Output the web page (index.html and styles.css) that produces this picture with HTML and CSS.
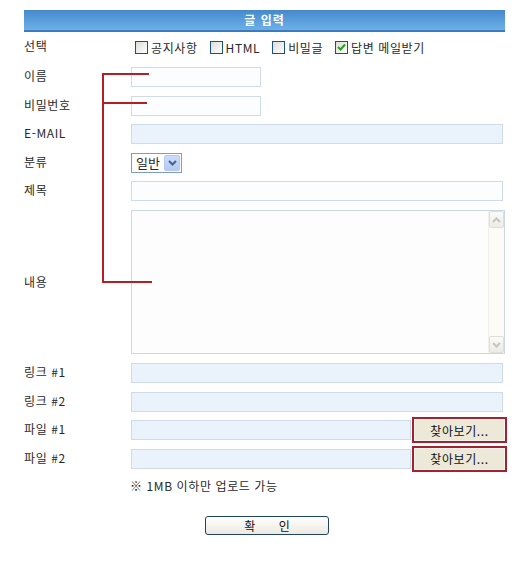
FILE: index.html
```html
<!DOCTYPE html>
<html lang="ko">
<head>
    <meta charset="UTF-8">
    <title>글 입력</title>
    <link rel="stylesheet" href="styles.css">
</head>
<body>
    <div class="write-form">
        <div class="title-bar">글 입력</div>

        <div class="row row-options">
            <span class="label">선택</span>
            <div class="options">
                <label class="check"><span class="box"></span>공지사항</label>
                <label class="check"><span class="box"></span>HTML</label>
                <label class="check"><span class="box"></span>비밀글</label>
                <label class="check"><span class="box checked">
                    <svg width="9" height="8" viewBox="0 0 9 8"><path d="M1 4 L3.5 6.5 L8 1.5" fill="none" stroke="#21a121" stroke-width="2"/></svg>
                </span>답변 메일받기</label>
            </div>
        </div>

        <div class="row">
            <span class="label">이름</span>
            <input type="text" class="field short white">
        </div>
        <div class="row">
            <span class="label">비밀번호</span>
            <input type="password" class="field short white">
        </div>
        <div class="row">
            <span class="label">E-MAIL</span>
            <input type="text" class="field wide">
        </div>
        <div class="row">
            <span class="label">분류</span>
            <div class="select">
                <span class="select-value">일반</span>
                <span class="select-btn">
                    <svg width="9" height="6" viewBox="0 0 9 6"><path d="M1 1 L4.5 4.5 L8 1" fill="none" stroke="#4d6185" stroke-width="2"/></svg>
                </span>
            </div>
        </div>
        <div class="row">
            <span class="label">제목</span>
            <input type="text" class="field wide white">
        </div>
        <div class="row row-content">
            <span class="label">내용</span>
            <div class="textbox">
                <textarea></textarea>
                <div class="scrollbar">
                    <span class="scroll-btn">
                        <svg width="9" height="6" viewBox="0 0 9 6"><path d="M1 5 L4.5 1.5 L8 5" fill="none" stroke="#c4c6c2" stroke-width="2"/></svg>
                    </span>
                    <span class="scroll-btn">
                        <svg width="9" height="6" viewBox="0 0 9 6"><path d="M1 1 L4.5 4.5 L8 1" fill="none" stroke="#c4c6c2" stroke-width="2"/></svg>
                    </span>
                </div>
            </div>
        </div>
        <div class="row">
            <span class="label">링크 #1</span>
            <input type="text" class="field wide">
        </div>
        <div class="row">
            <span class="label">링크 #2</span>
            <input type="text" class="field wide">
        </div>
        <div class="row">
            <span class="label">파일 #1</span>
            <div class="file">
                <input type="text" class="field file-path">
                <button class="find-button">찾아보기...</button>
            </div>
        </div>
        <div class="row">
            <span class="label">파일 #2</span>
            <div class="file">
                <input type="text" class="field file-path">
                <button class="find-button">찾아보기...</button>
            </div>
        </div>
        <div class="note">※ 1MB 이하만 업로드 가능</div>

        <div class="submit">
            <button class="submit-button">확&nbsp;&nbsp;&nbsp;&nbsp;&nbsp;&nbsp;&nbsp;인</button>
        </div>

        <!-- red guide lines -->
        <div class="guide guide-v"></div>
        <div class="guide guide-h1"></div>
        <div class="guide guide-h2"></div>
        <div class="guide guide-h3"></div>
    </div>
</body>
</html>
```

FILE: styles.css
```css
* {
    box-sizing: border-box;
}
body {
    margin: 0;
    background-color: #FFFFFF;
    font-family: "Noto Sans CJK KR", "Liberation Sans", sans-serif;
    font-size: 12px;
    letter-spacing: 0.6px;
    color: #2a2a2a;
}
.write-form {
    position: relative;
    width: 481px;
    margin: 10px 0 0 24px;
}
.title-bar {
    height: 22px;
    background: linear-gradient(#4589cb, #6cb0ea);
    border-bottom: 2px solid #3b7bbd;
    color: #FFFFFF;
    font-weight: 700;
    font-size: 12px;
    line-height: 20px;
    text-align: center;
    letter-spacing: 1px;
}
.row {
    display: flex;
    align-items: center;
    height: 28.6px;
}
.row-options {
    height: 30.7px;
}
.label {
    width: 107px;
    flex-shrink: 0;
    margin-top: -3px;
}
.options {
    display: flex;
    align-items: center;
    padding-left: 4px;
}
.check {
    display: flex;
    align-items: center;
    margin-right: 12px;
}
.check .box {
    display: flex;
    align-items: center;
    justify-content: center;
    width: 13px;
    height: 13px;
    border: 1px solid #1c5180;
    background: linear-gradient(135deg, #dcdcd7, #ffffff);
    margin-right: 3px;
}
.field {
    height: 20px;
    border: 1px solid #cfdbe6;
    background-color: #eaf3fc;
    padding: 0 3px;
    font-size: 12px;
    outline: none;
}
.field.white {
    background-color: #fbfdff;
}
.short {
    width: 130px;
}
.wide {
    width: 372px;
}
.select {
    display: flex;
    align-items: center;
    width: 51px;
    height: 20px;
    border: 1px solid #7f9db9;
    padding: 1px;
}
.select-value {
    flex-grow: 1;
    padding-left: 3px;
    font-size: 13px;
    line-height: 16px;
    letter-spacing: 0;
}
.select-btn {
    display: flex;
    align-items: center;
    justify-content: center;
    width: 16px;
    height: 16px;
    background: linear-gradient(#cbdcfc, #b4c9f3);
    border: 1px solid #b5c8ef;
    border-radius: 2px;
}
.row-content {
    height: 153.2px;
    align-items: flex-start;
    padding-top: 4.4px;
}
.row-content .label {
    margin-top: 63px;
}
.textbox {
    display: flex;
    width: 375px;
    height: 144px;
    border: 1px solid #cbd9e6;
    background-color: #fdfdfd;
}
.textbox textarea {
    flex-grow: 1;
    border: none;
    background: transparent;
    resize: none;
    outline: none;
}
.scrollbar {
    display: flex;
    flex-direction: column;
    justify-content: space-between;
    width: 16px;
    background-color: #fcfbf6;
    border-left: 1px solid #f1efe6;
}
.scroll-btn {
    display: flex;
    align-items: center;
    justify-content: center;
    height: 17px;
    background: linear-gradient(#fbfbf8, #ecebe5);
    border: 1px solid #e0ded6;
    border-radius: 2px;
}
.file {
    display: flex;
    align-items: center;
}
.file-path {
    width: 280px;
}
.find-button {
    width: 95px;
    height: 26px;
    margin-left: 1px;
    border: 2px solid #a2232f;
    background-color: #ece9d8;
    box-shadow: inset 0 0 0 1px #f6f4ec;
    font-family: "Noto Sans CJK KR", "Liberation Sans", sans-serif;
    font-size: 12px;
    letter-spacing: 0.6px;
    color: #111111;
    padding: 0;
}
.note {
    padding: 4px 0 0 106px;
    height: 22px;
    line-height: 18px;
}
.submit {
    display: flex;
    padding: 21px 0 0 181px;
}
.submit-button {
    width: 124px;
    height: 19px;
    border: 1px solid #22426e;
    border-radius: 3px;
    background: linear-gradient(#ffffff, #ece9df);
    font-family: "Noto Sans CJK KR", "Liberation Sans", sans-serif;
    font-size: 12px;
    line-height: 15px;
    color: #111111;
    padding: 0;
}
.guide {
    position: absolute;
    background-color: #b41e24;
}
.guide-v {
    left: 78px;
    top: 64px;
    width: 2px;
    height: 209px;
}
.guide-h1 {
    left: 78px;
    top: 63px;
    width: 47px;
    height: 2px;
}
.guide-h2 {
    left: 78px;
    top: 92px;
    width: 45px;
    height: 2px;
}
.guide-h3 {
    left: 78px;
    top: 271px;
    width: 50px;
    height: 2px;
}
```
